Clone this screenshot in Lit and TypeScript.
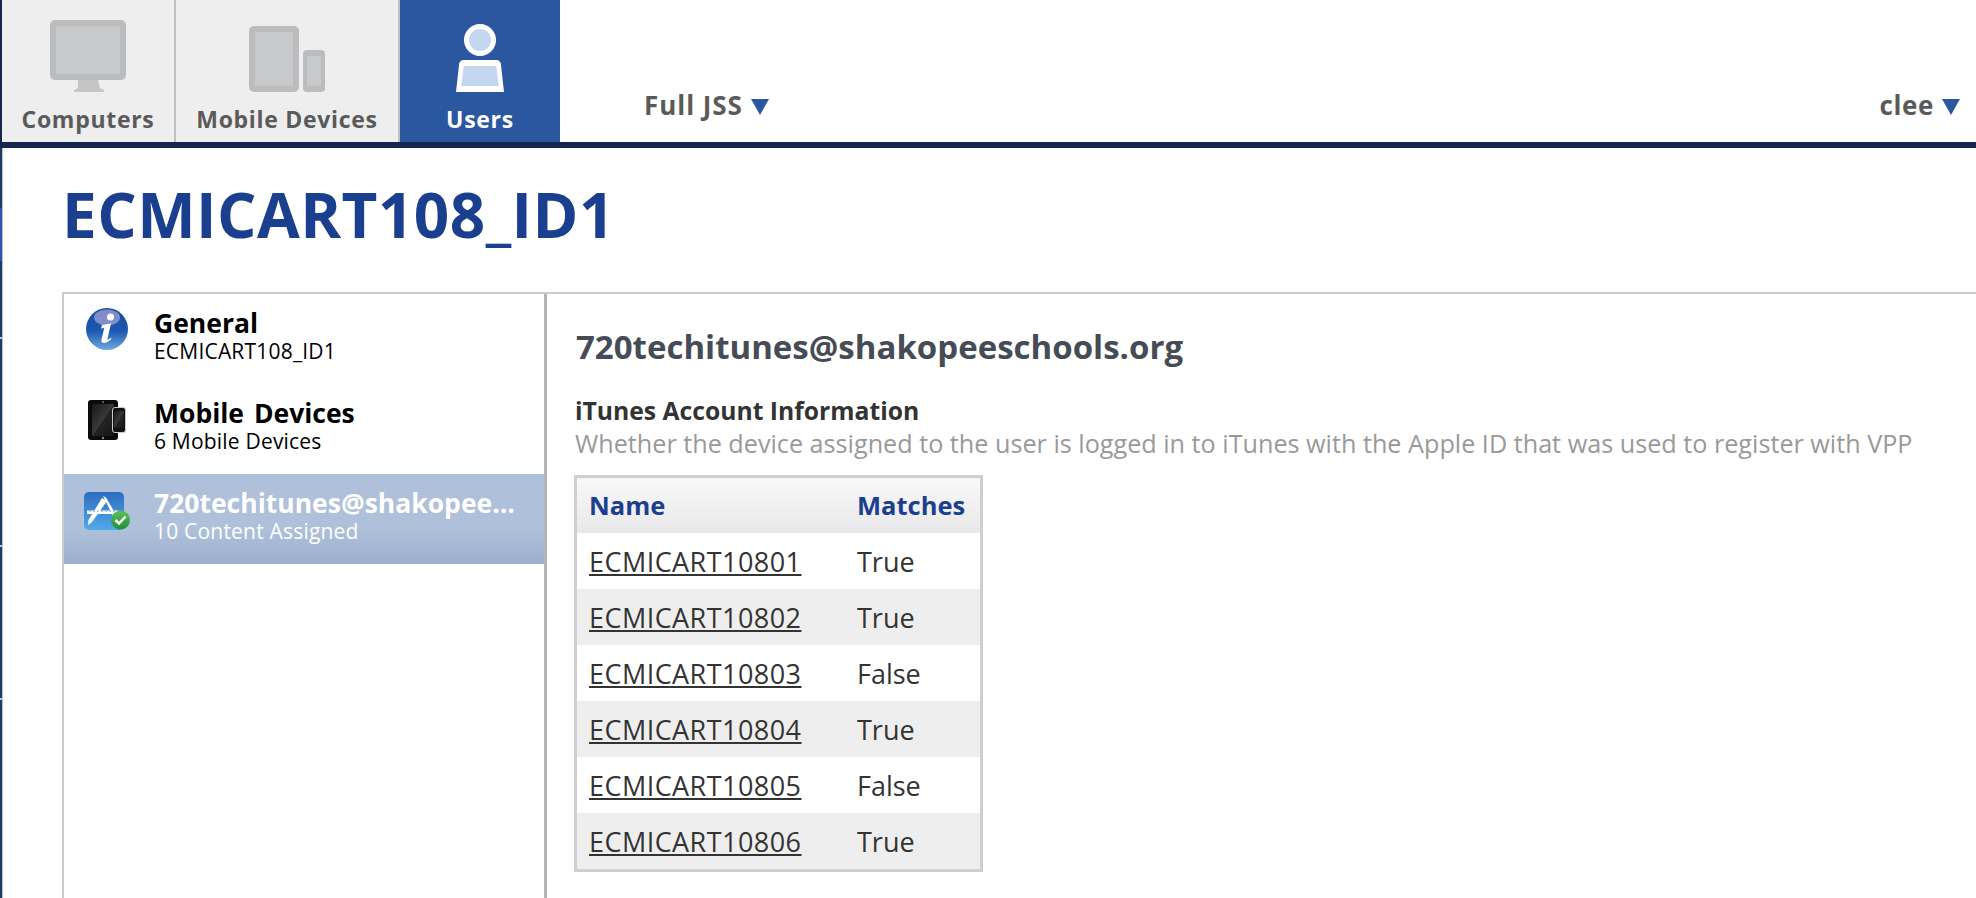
import { LitElement, html, css, svg } from 'lit';
import { customElement, property } from 'lit/decorators.js';

const computerIcon = svg`
  <svg class="tab-icon" width="76" height="72" viewBox="0 0 76 72">
    <rect x="0" y="0" width="76" height="60" rx="5" fill="#bbbcbd" />
    <rect x="6" y="6" width="64" height="48" fill="#c8c9ca" />
    <path d="M28 60h20l2 8 4 2v2H24v-2l4-2z" fill="#c4c5c6" />
  </svg>
`;

const devicesIcon = svg`
  <svg class="tab-icon" width="76" height="66" viewBox="0 0 76 66">
    <rect x="0" y="0" width="50" height="66" rx="5" fill="#bbbcbd" />
    <rect x="6" y="6" width="38" height="54" fill="#c8c9ca" />
    <rect x="54" y="24" width="22" height="42" rx="4" fill="#bbbcbd" />
    <rect x="58" y="30" width="14" height="30" fill="#c8c9ca" />
  </svg>
`;

const userIcon = svg`
  <svg class="tab-icon" width="48" height="68" viewBox="0 0 48 68">
    <circle cx="24" cy="16" r="13.500" fill="#c3d7ee" stroke="#fff" stroke-width="5" />
    <path d="M8 36h32c3 0 5 2 5 5l3 27H0l3-27c0-3 2-5 5-5z" fill="#fff" />
    <path d="M10 42h28c2 0 2.500 1 2.700 3l2 17H5.300l2-17c.2-2 .7-3 2.700-3z" fill="#c3d7ee" />
  </svg>
`;

const infoIcon = svg`
  <svg width="42" height="42" viewBox="0 0 42 42">
    <defs>
      <linearGradient id="info-ball" x1="0" y1="0" x2="0" y2="1">
        <stop offset="0" stop-color="#1b4a9e" />
        <stop offset="0.55" stop-color="#1c59ae" />
        <stop offset="1" stop-color="#6fa9e2" />
      </linearGradient>
    </defs>
    <circle cx="21" cy="21" r="21" fill="url(#info-ball)" />
    <ellipse cx="21" cy="9.500" rx="13" ry="8" fill="#a9a7d8" opacity="0.7" />
    <circle cx="24.500" cy="9" r="3.500" fill="#fff" />
    <path d="M16 17l9-1.500-3.500 15c-.2 1 .5 1.200 1.300.7l2-1.500.7 1c-3 3-5 4.300-7.500 4.300-2.300 0-3-1.500-2.500-3.500l2.700-11.500-3.200.5z" fill="#fff" />
  </svg>
`;

const mobileIcon = svg`
  <svg width="38" height="40" viewBox="0 0 38 40">
    <defs>
      <linearGradient id="device-face" x1="0" y1="0" x2="1" y2="1">
        <stop offset="0" stop-color="#171717" />
        <stop offset="0.5" stop-color="#3a3a3a" />
        <stop offset="0.51" stop-color="#242424" />
        <stop offset="1" stop-color="#161616" />
      </linearGradient>
    </defs>
    <rect x="0" y="0" width="30" height="40" rx="3" fill="#0b0b0b" />
    <rect x="4" y="4" width="22" height="32" fill="url(#device-face)" />
    <circle cx="15" cy="38" r="1.200" fill="#888" />
    <circle cx="15" cy="2" r="1" fill="#777" />
    <rect x="24.500" y="7.500" width="13" height="25" rx="2.500" fill="#111" stroke="#c9c9c9" stroke-width="1" />
    <rect x="26" y="11" width="10" height="17" fill="url(#device-face)" />
  </svg>
`;

const appIcon = svg`
  <svg width="46" height="38" viewBox="0 0 46 38">
    <defs>
      <linearGradient id="app-tile" x1="0" y1="0" x2="0" y2="1">
        <stop offset="0" stop-color="#2d6cc0" />
        <stop offset="1" stop-color="#52aae8" />
      </linearGradient>
      <linearGradient id="app-check" x1="0" y1="0" x2="0" y2="1">
        <stop offset="0" stop-color="#5fc15a" />
        <stop offset="1" stop-color="#1f8f3a" />
      </linearGradient>
    </defs>
    <rect x="0" y="0" width="40" height="38" rx="5" fill="url(#app-tile)" />
    <path d="M19 4l3 1.500 11 19-3.500.5z" fill="#fff" />
    <path d="M18 6l5 3L8 30l-4 3 .5-5z" fill="#fff" />
    <path d="M3 18.500h31v3.500H3z" fill="#fff" />
    <path d="M6 18.500v1.500M10 18.500v1.500M14 18.500v1.500M18 18.500v1.500M22 18.500v1.500M26 18.500v1.500M30 18.500v1.500" stroke="#5b8fd0" stroke-width="1" />
    <circle cx="36.500" cy="28" r="9.500" fill="url(#app-check)" />
    <path d="M31.500 28l3.500 3.500 6.500-7" fill="none" stroke="#fff" stroke-width="2.500" />
  </svg>
`;

const rows = [
  { name: 'ECMICART10801', matches: 'True' },
  { name: 'ECMICART10802', matches: 'True' },
  { name: 'ECMICART10803', matches: 'False' },
  { name: 'ECMICART10804', matches: 'True' },
  { name: 'ECMICART10805', matches: 'False' },
  { name: 'ECMICART10806', matches: 'True' },
];

@customElement('app-root')
export class AppRoot extends LitElement {
  static styles = css`
    :host {
      display: block;
      height: 898px;
      overflow: hidden;
      background: #fff;
      font-family: 'Open Sans', 'DejaVu Sans', sans-serif;
      color: #333;
    }

    .header {
      display: flex;
      height: 142px;
      border-bottom: 6px solid #14284f;
      border-left: 2px solid #14284f;
    }

    .tab {
      display: flex;
      flex-direction: column;
      align-items: center;
      box-sizing: border-box;
      background: #eeeeee;
      border-right: 2px solid #c4bfbf;
      color: #5a5a5a;
      font-size: 23px;
      font-weight: 700;
      letter-spacing: 0.7px;
      line-height: 30px;
    }

    .tab .icon-box {
      display: flex;
      align-items: flex-end;
      justify-content: center;
      height: 92px;
      margin-bottom: 12px;
    }

    .tab.computers {
      width: 174px;
    }

    .tab.mobile {
      width: 224px;
    }

    .tab.users {
      width: 160px;
      background: #2b57a0;
      border-right: 0;
      color: #fff;
    }

    .menu {
      display: flex;
      align-items: center;
      gap: 8px;
      align-self: flex-end;
      margin-bottom: 22px;
      color: #5a5a5a;
      font-size: 26px;
      font-weight: 700;
      letter-spacing: 0.6px;
      line-height: 30px;
    }

    .menu.site {
      margin-left: 84px;
      letter-spacing: 0.95px;
    }

    .menu.account {
      margin-left: auto;
      margin-right: 16px;
    }

    .arrow {
      width: 0;
      height: 0;
      border-left: 9px solid transparent;
      border-right: 9px solid transparent;
      border-top: 16px solid #2b57a0;
      margin-top: 4px;
    }

    .page {
      height: 750px;
      box-sizing: border-box;
      padding-left: 62px;
      background:
        linear-gradient(
            #1d3c68 0 60px,
            #2f55b0 60px 113px,
            #1d3c68 113px 189px,
            #c4c8ce 189px 191px,
            #1d3c68 191px 397px,
            #c4c8ce 397px 399px,
            #1d3c68 399px 550px,
            #c4c8ce 550px 552px,
            #1d3c68 552px
          )
          left top / 2px 100% no-repeat,
        linear-gradient(#b7c1ce, #b7c1ce) left top / 3px 100% no-repeat;
    }

    h1 {
      margin: 0;
      padding-top: 28px;
      height: 144px;
      box-sizing: border-box;
      color: #1b3f8f;
      font-size: 62px;
      font-weight: 700;
      letter-spacing: 0.45px;
      line-height: 76px;
    }

    .panel {
      display: flex;
      height: 606px;
      border-top: 2px solid #cccccc;
      border-left: 2px solid #cccccc;
    }

    .sidebar {
      width: 480px;
      flex: none;
      border-right: 3px solid #b4b4b4;
    }

    .item {
      display: flex;
      box-sizing: border-box;
      height: 90px;
      padding: 14px 0 0 22px;
      color: #000;
    }

    .item .glyph {
      width: 68px;
      flex: none;
    }

    .item .title {
      font-size: 26.5px;
      font-weight: 700;
      word-spacing: 3px;
      line-height: 30px;
    }

    .item .sub {
      font-size: 21px;
      letter-spacing: 0.2px;
      line-height: 26px;
    }

    .item .text {
      min-width: 0;
      width: 368px;
    }

    .item .title,
    .item .sub {
      white-space: nowrap;
    }

    .item.mobile-row .glyph {
      padding: 2px 0 0 2px;
      width: 66px;
    }

    .item.selected {
      background: linear-gradient(#afc0da 0, #afc0da 60%, #9eafce 100%);
      color: #fff;
      padding-left: 20px;
    }

    .item.selected .glyph {
      width: 70px;
      padding-top: 4px;
    }

    .item.selected .title {
      overflow: hidden;
      text-overflow: ellipsis;
      padding-bottom: 4px;
      margin-bottom: -4px;
    }

    .content {
      padding: 31px 0 0 28px;
      flex: 1;
      min-width: 0;
    }

    h2 {
      margin: 0 0 26px 1px;
      color: #464c56;
      font-size: 33px;
      font-weight: 700;
      line-height: 44px;
    }

    h3 {
      margin: 0;
      color: #333;
      font-size: 24.7px;
      font-weight: 700;
      line-height: 32px;
    }

    .hint {
      margin: 0 0 16px;
      color: #999999;
      font-size: 25.200px;
      line-height: 32px;
      white-space: nowrap;
    }

    table {
      border-collapse: collapse;
      border: 3px solid #cfcfcf;
      width: 409px;
      margin-left: -1px;
      table-layout: fixed;
    }

    th {
      height: 53px;
      padding: 0 0 2px 12px;
      background: linear-gradient(#f8f8f8, #e8e8ea);
      color: #1b3f8f;
      font-size: 25.500px;
      font-weight: 700;
      text-align: left;
    }

    td {
      height: 56px;
      padding: 0 0 0 12px;
      font-size: 27px;
      color: #333;
    }

    tr:nth-child(even) td {
      background: #eeeeee;
    }

    th.name-col {
      width: 256px;
    }

    a {
      color: #333;
      letter-spacing: 0.45px;
      text-decoration: underline;
    }
  `;

  @property()
  account = '720techitunes@shakopeeschools.org';

  render() {
    return html`
      <div class="header">
        <div class="tab computers">
          <div class="icon-box">${computerIcon}</div>
          Computers
        </div>
        <div class="tab mobile">
          <div class="icon-box">${devicesIcon}</div>
          Mobile Devices
        </div>
        <div class="tab users">
          <div class="icon-box">${userIcon}</div>
          Users
        </div>
        <div class="menu site">Full JSS <span class="arrow"></span></div>
        <div class="menu account">clee <span class="arrow"></span></div>
      </div>

      <div class="page">
        <h1>ECMICART108_ID1</h1>
        <div class="panel">
          <div class="sidebar">
            <div class="item">
              <div class="glyph">${infoIcon}</div>
              <div class="text">
                <div class="title">General</div>
                <div class="sub">ECMICART108_ID1</div>
              </div>
            </div>
            <div class="item mobile-row">
              <div class="glyph">${mobileIcon}</div>
              <div class="text">
                <div class="title">Mobile Devices</div>
                <div class="sub">6 Mobile Devices</div>
              </div>
            </div>
            <div class="item selected">
              <div class="glyph">${appIcon}</div>
              <div class="text">
                <div class="title">${this.account}</div>
                <div class="sub">10 Content Assigned</div>
              </div>
            </div>
          </div>

          <div class="content">
            <h2>${this.account}</h2>
            <h3>iTunes Account Information</h3>
            <p class="hint">
              Whether the device assigned to the user is logged in to iTunes
              with the Apple ID that was used to register with VPP
            </p>
            <table>
              <thead>
                <tr>
                  <th class="name-col">Name</th>
                  <th>Matches</th>
                </tr>
              </thead>
              <tbody>
                ${rows.map(
                  row => html`
                    <tr>
                      <td><a href="#">${row.name}</a></td>
                      <td>${row.matches}</td>
                    </tr>
                  `
                )}
              </tbody>
            </table>
          </div>
        </div>
      </div>
    `;
  }
}

declare global {
  interface HTMLElementTagNameMap {
    'app-root': AppRoot;
  }
}
